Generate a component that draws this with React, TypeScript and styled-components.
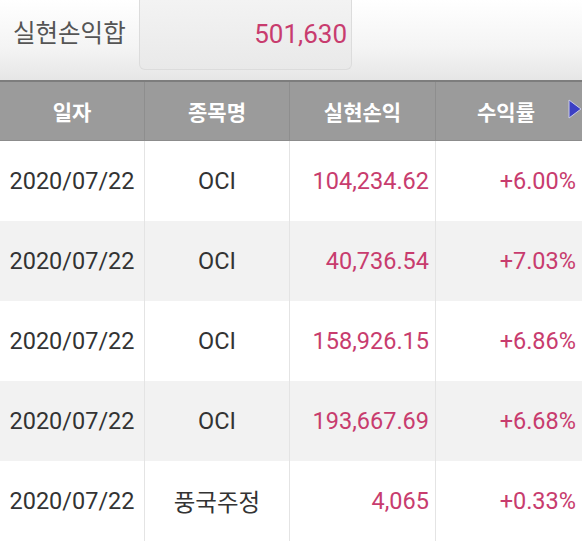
import styled, { createGlobalStyle } from "styled-components";

const GlobalStyle = createGlobalStyle`
    html, body {
        margin: 0;
        padding: 0;
        background: #fff;
        font-family: Roboto, "Noto Sans CJK KR", sans-serif;
    }
`;

const rows = [
    { date: "2020/07/22", name: "OCI", profit: "104,234.62", rate: "+6.00%" },
    { date: "2020/07/22", name: "OCI", profit: "40,736.54", rate: "+7.03%" },
    { date: "2020/07/22", name: "OCI", profit: "158,926.15", rate: "+6.86%" },
    { date: "2020/07/22", name: "OCI", profit: "193,667.69", rate: "+6.68%" },
    { date: "2020/07/22", name: "풍국주정", profit: "4,065", rate: "+0.33%" },
];

const App = () => {
    return (
        <Page>
            <GlobalStyle />
            <SumBar>
                <SumLabel>실현손익합</SumLabel>
                <SumBox>501,630</SumBox>
            </SumBar>
            <Table>
                <HeadRow>
                    <HeadCell>일자</HeadCell>
                    <HeadCell>종목명</HeadCell>
                    <HeadCell>실현손익</HeadCell>
                    <HeadCell>
                        수익률
                        <Arrow viewBox="0 0 14 20">
                            <path d="M1 1 L13 10 L1 19 Z" fill="#3b3fc4" stroke="#c9cbe8" strokeWidth="1" />
                        </Arrow>
                    </HeadCell>
                </HeadRow>
                {rows.map((r, i) => (
                    <Row key={i} $alt={i % 2 === 1}>
                        <Cell>{r.date}</Cell>
                        <Cell>{r.name}</Cell>
                        <Cell $right $pink>{r.profit}</Cell>
                        <Cell $right $pink>{r.rate}</Cell>
                    </Row>
                ))}
            </Table>
        </Page>
    );
};

const Page = styled.div`
    width: 582px;
    height: 544px;
    overflow: hidden;
`;

const SumBar = styled.div`
    display: flex;
    align-items: flex-start;
    height: 80px;
    background: linear-gradient(#ffffff, #f4f4f4 60%, #e6e6e6);
`;

const SumLabel = styled.div`
    width: 139px;
    height: 70px;
    line-height: 68px;
    padding-left: 13px;
    box-sizing: border-box;
    font-size: 24.5px;
    color: #555;
`;

const SumBox = styled.div`
    width: 213px;
    height: 70px;
    box-sizing: border-box;
    border: 1px solid #dcdcdc;
    border-top: none;
    border-radius: 0 0 6px 6px;
    background: linear-gradient(#f3f3f3, #e9e9e9);
    text-align: right;
    padding-right: 4px;
    line-height: 68px;
    font-size: 26px;
    color: #c83c6e;
`;

const Table = styled.div`
    display: flex;
    flex-direction: column;
`;

const HeadRow = styled.div`
    display: grid;
    grid-template-columns: 145px 145px 146px 146px;
    height: 61px;
    box-sizing: border-box;
    background: #9b9b9b;
    border-top: 2px solid #7d7d7d;
    border-bottom: 1px solid #8c8c8c;
`;

const HeadCell = styled.div`
    position: relative;
    display: flex;
    align-items: center;
    justify-content: center;
    color: #fff;
    font-size: 21px;
    font-weight: 700;
    border-right: 1px solid #8e8e8e;
    &:last-child {
        border-right: none;
        padding-right: 6px;
    }
`;

const Arrow = styled.svg`
    position: absolute;
    right: 0;
    top: 17px;
    width: 14px;
    height: 20px;
`;

const Row = styled.div<{ $alt?: boolean }>`
    display: grid;
    grid-template-columns: 145px 145px 146px 146px;
    height: 80px;
    flex-shrink: 0;
    background: ${(p) => (p.$alt ? "#f2f2f2" : "#ffffff")};
`;

const Cell = styled.div<{ $right?: boolean; $pink?: boolean }>`
    display: flex;
    align-items: center;
    justify-content: ${(p) => (p.$right ? "flex-end" : "center")};
    padding-right: ${(p) => (p.$right ? "6px" : "0")};
    font-size: 23.5px;
    color: ${(p) => (p.$pink ? "#c83c6e" : "#333")};
    border-right: 1px solid #e4e4e4;
    &:last-child {
        border-right: none;
    }
`;

export default App;
